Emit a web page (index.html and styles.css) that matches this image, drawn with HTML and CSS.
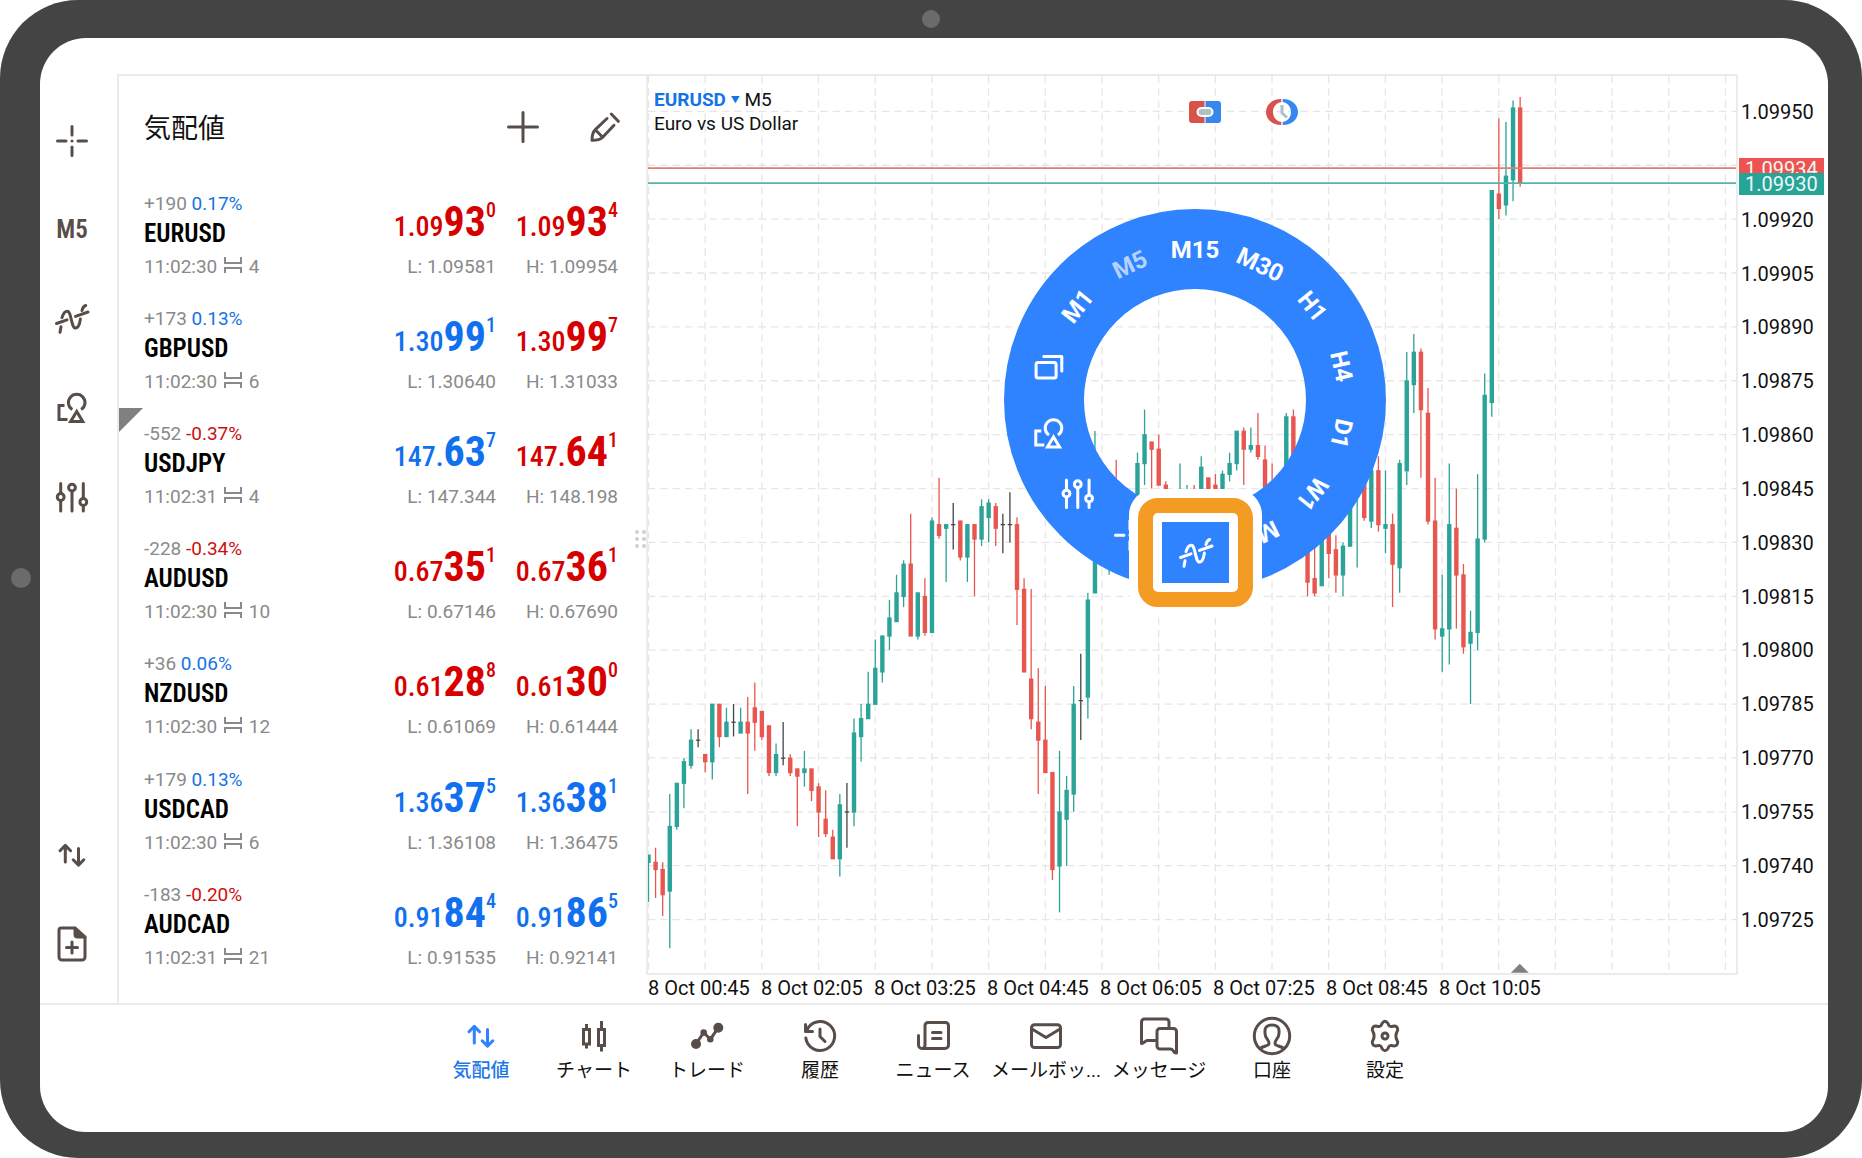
FILE: index.html
```html
<!DOCTYPE html>
<html lang="ja">
<head>
<meta charset="utf-8">
<title>気配値</title>
<link rel="stylesheet" href="styles.css">
</head>
<body>
<svg class="defs" aria-hidden="true">
  <symbol id="i-cross" viewBox="0 0 32 32"><path d="M1.500 16H10M22 16h8.500M16 1.500V10M16 22v8.500M16 15.900v.2"/></symbol>
  <symbol id="i-indicator" viewBox="0 0 32 32"><path d="M.5 20.500 11 16.800M19.500 13.400 32 9M6 14.600C7.300 10.500 9 8.300 11.300 8.300 15.500 8.300 15 25 19.500 25c2.600 0 4.200-4 4.900-9M4 29.300l1-5.600M26 7.500C26.600 5 28 3 29.700 2.500"/></symbol>
  <symbol id="i-shapes" viewBox="0 0 32 32"><path class="sharp" d="M16.300 17.600a8.300 8.300 0 1 1 8.800 0M20.700 19.500 14.600 29.600h12.200zM8.500 13.500H3v14H11.500"/></symbol>
  <symbol id="i-sliders" viewBox="0 0 32 32"><path d="M4.700 2.500v10M4.700 19.500V30M16 10.200V30M27.300 2.500v15M27.300 24.500V30"/><circle cx="4.700" cy="16" r="3.400"/><circle cx="16" cy="6.600" r="3.400"/><circle cx="27.300" cy="21" r="3.400"/></symbol>
  <symbol id="i-windows" viewBox="0 0 32 32"><rect x="3.300" y="12" width="20" height="15.500" rx="2"/><path d="M11 6h18v14.500"/></symbol>
  <symbol id="i-updown" viewBox="0 0 32 32"><path d="M9.300 23V6.500M4 11.700l5.300-5.300 5.300 5.300M22.500 9.500V26M17.200 20.800l5.300 5.300 5.300-5.300"/></symbol>
  <symbol id="i-newdoc" viewBox="0 0 32 38"><path d="M5 3H19l10 9V32a3 3 0 0 1-3 3H6a3 3 0 0 1-3-3V5a2 2 0 0 1 2-2zM16 17v11M10.500 22.500h11"/><path class="solid" d="M19 3l10 9H21.500a2.500 2.500 0 0 1-2.500-2.500z"/></symbol>
  <symbol id="i-plus" viewBox="0 0 32 32"><path d="M1.500 16h29M16 1.500v29"/></symbol>
  <symbol id="i-pencil" viewBox="0 0 32 32"><path d="M18 7.500 6.300 18.700C3.500 21.500 3 25 3 29.300 7.500 29.300 11 29 13.700 26.200L25 14.300M6.300 18.700 13.700 26.200M22.300 3 29.300 10.300"/></symbol>
  <symbol id="i-spread" viewBox="0 0 18 16"><path d="M1 0V6H17V0M1 16v-5H17v5"/></symbol>
  <symbol id="i-chart" viewBox="0 0 32 32"><path class="sharp" d="M5.500 9.500h6v14.500h-6zM20.500 9.500h6v16h-6zM8.500 4v5M8.500 24.500v4M23.500 1V9M23.500 26v5.500"/></symbol>
  <symbol id="i-trade" viewBox="0 0 32 32"><path d="M5 24 12.700 12.500 19.300 19.300 27.300 7.700"/><g class="solid"><circle cx="5" cy="24" r="3.500"/><circle cx="27.300" cy="7.700" r="3.500"/><circle cx="12.700" cy="12.500" r="1.800"/><circle cx="19.300" cy="19.300" r="1.800"/></g></symbol>
  <symbol id="i-history" viewBox="0 0 32 32"><path d="M1.800 18A14.500 14.500 0 1 0 3.200 9.500M1.500 4.500V11.500H8.500M16 9v7.500l5 5"/></symbol>
  <symbol id="i-news" viewBox="0 0 32 32"><path d="M8 25V5.500a3 3 0 0 1 3-3H28.500a3 3 0 0 1 3 3V25a3.500 3.500 0 0 1-3.500 3.500H5A3.500 3.500 0 0 1 1.500 25V15.500M8 25a3.500 3.500 0 0 1-3 3.500M15.500 12.500H24M15.500 18.500H24"/></symbol>
  <symbol id="i-mail" viewBox="0 0 32 32"><rect x="1.500" y="4.700" width="29" height="22.800" rx="3"/><path d="M2 9 16 17.500 30 9"/></symbol>
  <symbol id="i-message" viewBox="0 0 38 38"><path d="M29 11V5a3 3 0 0 0-3-3H4.500a3 3 0 0 0-3 3V26.500c2 .5 3.500-3 6-3H16M20 11.500H33.500a3 3 0 0 1 3 3V36C33 36.500 34 32 30.500 32H20a3 3 0 0 1-3-3V14.500a3 3 0 0 1 3-3z"/></symbol>
  <symbol id="i-account" viewBox="0 0 38 38"><circle cx="19" cy="19" r="17.700"/><path d="M7 31.500c3-2 6-2.500 8-3.500 2-1.500.5-4-.5-5.500C12.500 20 11.700 18 12 15 11.500 10 14.500 8 19 8s7.500 2 7 7c.3 3-.5 5-2.500 7.500-1 1.500-2.500 4-.5 5.500 2 1 5 1.500 8 3.500"/></symbol>
  <symbol id="i-gear" viewBox="0 0 32 32"><path d="M13 3.500Q16 -1 19 3.500C20 6.500 21 7 24 6.200Q29 5.500 28.700 10.200C26.300 14 26.300 18 28.700 21.800Q29 26.500 24 25.800C21 25 20 25.500 19 28.500Q16 33 13 28.500C12 25.500 11 25 8 25.800Q3 26.500 3.300 21.800C5.700 18 5.700 14 3.300 10.200Q3 5.500 8 6.200C11 7 12 6.500 13 3.500z"/><circle cx="16" cy="16" r="3"/></symbol>
</svg>

<div class="device">
  <span class="lens lens-top"></span>
  <span class="lens lens-left"></span>
  <div class="screen">
    <main class="workspace">
      <div class="rail">
        <button aria-label="十字線"><svg class="icon"><use href="#i-cross"/></svg></button>
        <button>M5</button>
        <button aria-label="インディケータ"><svg class="icon"><use href="#i-indicator"/></svg></button>
        <button aria-label="オブジェクト"><svg class="icon"><use href="#i-shapes"/></svg></button>
        <button aria-label="チャート設定"><svg class="icon"><use href="#i-sliders"/></svg></button>
        <button class="push" aria-label="気配値"><svg class="icon"><use href="#i-updown"/></svg></button>
        <button aria-label="新規注文"><svg class="icon icon-doc"><use href="#i-newdoc"/></svg></button>
      </div>

      <section class="quotes">
        <header class="quotes-head">
          <h1>気配値</h1>
          <button aria-label="追加"><svg class="icon"><use href="#i-plus"/></svg></button>
          <button aria-label="編集"><svg class="icon"><use href="#i-pencil"/></svg></button>
        </header>
        <ul class="list">
          <li class="row">
            <p class="change">+190 <span class="up">0.17%</span></p>
            <p class="symbol">EURUSD</p>
            <p class="time">11:02:30 <svg><use href="#i-spread"/></svg> 4</p>
            <p class="price red">1.09<b>93</b><sup>0</sup></p><p class="price red">1.09<b>93</b><sup>4</sup></p>
            <p class="limit">L: 1.09581</p><p class="limit">H: 1.09954</p>
          </li>
          <li class="row">
            <p class="change">+173 <span class="up">0.13%</span></p>
            <p class="symbol">GBPUSD</p>
            <p class="time">11:02:30 <svg><use href="#i-spread"/></svg> 6</p>
            <p class="price blue">1.30<b>99</b><sup>1</sup></p><p class="price red">1.30<b>99</b><sup>7</sup></p>
            <p class="limit">L: 1.30640</p><p class="limit">H: 1.31033</p>
          </li>
          <li class="row marked">
            <p class="change">-552 <span class="down">-0.37%</span></p>
            <p class="symbol">USDJPY</p>
            <p class="time">11:02:31 <svg><use href="#i-spread"/></svg> 4</p>
            <p class="price blue">147.<b>63</b><sup>7</sup></p><p class="price red">147.<b>64</b><sup>1</sup></p>
            <p class="limit">L: 147.344</p><p class="limit">H: 148.198</p>
          </li>
          <li class="row">
            <p class="change">-228 <span class="down">-0.34%</span></p>
            <p class="symbol">AUDUSD</p>
            <p class="time">11:02:30 <svg><use href="#i-spread"/></svg> 10</p>
            <p class="price red">0.67<b>35</b><sup>1</sup></p><p class="price red">0.67<b>36</b><sup>1</sup></p>
            <p class="limit">L: 0.67146</p><p class="limit">H: 0.67690</p>
          </li>
          <li class="row">
            <p class="change">+36 <span class="up">0.06%</span></p>
            <p class="symbol">NZDUSD</p>
            <p class="time">11:02:30 <svg><use href="#i-spread"/></svg> 12</p>
            <p class="price red">0.61<b>28</b><sup>8</sup></p><p class="price red">0.61<b>30</b><sup>0</sup></p>
            <p class="limit">L: 0.61069</p><p class="limit">H: 0.61444</p>
          </li>
          <li class="row">
            <p class="change">+179 <span class="up">0.13%</span></p>
            <p class="symbol">USDCAD</p>
            <p class="time">11:02:30 <svg><use href="#i-spread"/></svg> 6</p>
            <p class="price blue">1.36<b>37</b><sup>5</sup></p><p class="price blue">1.36<b>38</b><sup>1</sup></p>
            <p class="limit">L: 1.36108</p><p class="limit">H: 1.36475</p>
          </li>
          <li class="row">
            <p class="change">-183 <span class="down">-0.20%</span></p>
            <p class="symbol">AUDCAD</p>
            <p class="time">11:02:31 <svg><use href="#i-spread"/></svg> 21</p>
            <p class="price blue">0.91<b>84</b><sup>4</sup></p><p class="price blue">0.91<b>86</b><sup>5</sup></p>
            <p class="limit">L: 0.91535</p><p class="limit">H: 0.92141</p>
          </li>
        </ul>
        <svg class="grip" viewBox="0 0 11 18" aria-hidden="true"><circle cx="2" cy="2" r="2"/><circle cx="9" cy="2" r="2"/><circle cx="2" cy="9" r="2"/><circle cx="9" cy="9" r="2"/><circle cx="2" cy="16" r="2"/><circle cx="9" cy="16" r="2"/></svg>
      </section>

      <section class="chart">
        <div class="plot">
          <svg id="candles" class="candles" viewBox="0 0 1087 896"></svg>
          <div class="caption">
            <p><button class="pair">EURUSD <small>▼</small></button> M5</p>
            <p>Euro vs US Dollar</p>
          </div>
          <div class="tools">
            <button aria-label="ワンクリック取引"><svg width="32" height="26" viewBox="0 0 32 26"><path fill="#d9524a" d="M3 2H15.500V24H3a3 3 0 0 1-3-3V5a3 3 0 0 1 3-3z"/><path fill="#3588ee" d="M16.500 2H29a3 3 0 0 1 3 3V21a3 3 0 0 1-3 3H16.500z"/><rect x="8.500" y="9" width="15" height="8" rx="4" fill="#b0bec5" stroke="#fff" stroke-width="2"/></svg></button>
            <button aria-label="板情報"><svg width="32" height="26" viewBox="0 0 32 26"><path fill="#d9524a" d="M15.300 0V3C10 4 7 8 7 13s3 9 8.300 10v3C6 26 0 20 0 13S6 0 15.300 0z"/><path fill="#3588ee" d="M16.700 0C26 0 32 6 32 13s-6 13-15.300 13v-3C22 22 25 18 25 13S22 4 16.700 3z"/><path fill="none" stroke="#b0bec5" stroke-width="3" d="M16 6v8l5 4.500"/></svg></button>
          </div>
          <div class="wheel">
            <button style="--a:0deg">M15</button>
            <button style="--a:25.700deg">M30</button>
            <button style="--a:51.400deg">H1</button>
            <button style="--a:77.100deg">H4</button>
            <button style="--a:102.900deg">D1</button>
            <button style="--a:128.600deg">W1</button>
            <button style="--a:154.300deg">MN</button>
            <button class="upright" style="--a:205.700deg" aria-label="十字線"><svg class="icon"><use href="#i-cross"/></svg></button>
            <button class="upright" style="--a:231.400deg" aria-label="チャート設定"><svg class="icon"><use href="#i-sliders"/></svg></button>
            <button class="upright" style="--a:257.100deg" aria-label="オブジェクト"><svg class="icon"><use href="#i-shapes"/></svg></button>
            <button class="upright" style="--a:282.900deg" aria-label="ウィンドウ"><svg class="icon"><use href="#i-windows"/></svg></button>
            <button style="--a:308.600deg">M1</button>
            <button class="current" style="--a:334.300deg">M5</button>
            <div class="focus"><div class="focus-frame"><button aria-label="インディケータ"><svg class="icon"><use href="#i-indicator"/></svg></button></div></div>
          </div>
        </div>
        <div class="prices">
          <span>1.09950</span><span></span><span>1.09920</span><span>1.09905</span><span>1.09890</span><span>1.09875</span><span>1.09860</span><span>1.09845</span><span>1.09830</span><span>1.09815</span><span>1.09800</span><span>1.09785</span><span>1.09770</span><span>1.09755</span><span>1.09740</span><span>1.09725</span>
          <div class="tags"><span class="tag ask">1.09934</span><span class="tag bid">1.09930</span></div>
        </div>
        <div class="times">
          <span>8 Oct 00:45</span><span>8 Oct 02:05</span><span>8 Oct 03:25</span><span>8 Oct 04:45</span><span>8 Oct 06:05</span><span>8 Oct 07:25</span><span>8 Oct 08:45</span><span>8 Oct 10:05</span>
        </div>
      </section>
    </main>

    <nav class="tabs">
      <a href="#quotes" class="active"><svg class="icon"><use href="#i-updown"/></svg><span>気配値</span></a>
      <a href="#chart"><svg class="icon"><use href="#i-chart"/></svg><span>チャート</span></a>
      <a href="#trade"><svg class="icon"><use href="#i-trade"/></svg><span>トレード</span></a>
      <a href="#history"><svg class="icon"><use href="#i-history"/></svg><span>履歴</span></a>
      <a href="#news"><svg class="icon"><use href="#i-news"/></svg><span>ニュース</span></a>
      <a href="#mail"><svg class="icon"><use href="#i-mail"/></svg><span>メールボッ...</span></a>
      <a href="#messages"><svg class="icon icon-large"><use href="#i-message"/></svg><span>メッセージ</span></a>
      <a href="#account"><svg class="icon icon-large"><use href="#i-account"/></svg><span>口座</span></a>
      <a href="#settings"><svg class="icon"><use href="#i-gear"/></svg><span>設定</span></a>
    </nav>
  </div>
</div>
<script src="chart.js"></script>
</body>
</html>
```
FILE: chart.js
```js
// Candles as [high, low, body top, body bottom, colour], in points above 1.09700.
// A null is a bar without a drawn candle.
const U = "#2ba398", D = "#e85650", N = "#444444";
const bars = [
  [43,30,43,41,U],[45,31,41,39,D],[41,26,39,32,D],[60,17,51,33,U],[63,50,63,51,U],[70,56,69,63,U],
  [78,67,75,68,U],[78,73,75,75,N],[71,66,71,69,D],[85,64,85,69,U],[85,73,85,76,D],[84,76,80,76,U],
  [85,76,80,80,N],[84,77,80,77,U],[87,60,80,77,D],[91,72,84,80,D],[83,75,83,76,D],[79,65,79,66,D],
  [74,65,71,66,U],[80,68,70,70,N],[71,65,70,66,D],[67,51,67,65,D],[72,62,67,66,U],[67,58,67,61,D],
  [63,48,62,55,D],[61,48,53,49,D],[50,42,48,42,D],[60,37,57,42,U],[63,45,55,55,N],[81,51,77,55,U],
  [85,69,81,76,U],[94,81,85,81,U],[103,85,95,85,U],[104,91,104,94,U],[114,100,109,104,U],[121,108,116,108,U],
  [125,112,124,115,U],[138,104,124,104,D],[116,103,116,104,U],[120,104,115,105,D],[137,105,136,105,U],[148,131,135,132,D],
  [135,119,135,134,U],[141,128,135,135,N],[136,125,136,126,D],[135,119,135,126,U],[135,115,135,131,D],[142,129,140,131,U],
  [142,130,141,137,U],[141,129,140,134,D],[138,127,135,135,N],[144,130,135,135,N],[137,107,135,117,D],[120,94,117,94,D],
  [117,78,92,81,D],[95,60,80,75,D],[90,66,75,66,D],[66,36,66,39,D],[72,27,55,40,U],[65,40,61,53,U],
  [90,55,85,60,U],[99,75,86,86,N],[116,81,114,87,U],[161,116,133,116,U],null,[132,121,131,125,U],
  [153,130,145,132,D],[140,132,140,132,U],[143,134,143,134,U],[155,140,152,140,U],[167,146,160,152,U],[158,145,158,156,D],
  [160,146,156,146,D],[147,140,146,141,D],[144,140,144,140,D],[152,140,143,141,U],[146,140,143,141,U],[146,140,143,141,D],
  [154,140,151,141,U],[148,140,148,141,D],[149,140,146,141,D],[150,141,149,142,U],[155,147,152,149,U],[161,150,161,152,U],
  [162,146,161,156,D],[162,155,157,156,U],[166,153,157,154,D],[157,140,153,140,D],[152,140,144,141,D],null,
  [166,140,165,142,U],[167,130,165,135,D],null,[130,115,130,119,D],[135,115,120,116,D],[135,118,135,118,U],
  [135,120,135,127,D],[132,116,128,121,D],[130,115,129,121,U],[140,129,140,129,U],[146,123,146,143,U],[150,136,150,137,D],
  [152,134,150,136,U],[154,133,150,135,D],[150,127,135,134,U],[138,112,135,124,D],[153,116,152,123,U],[183,146,175,150,U],
  [188,166,183,174,U],[184,148,183,167,D],[173,135,166,136,D],[148,103,136,106,D],[121,94,106,104,U],[152,96,135,106,U],
  [145,106,134,121,D],[124,99,121,101,D],[111,85,105,102,U],[149,100,131,105,U],[177,130,171,131,U],[228,165,228,169,U],
  [248,220,227,223,D],[247,221,232,224,U],[253,225,251,231,U],[254,229,251,230,D]
];

const STEP = 7.08, POINT = 3.589;
const y = n => 627.5 - (n - 85) * POINT;
const out = [];

for (let i = 0; i < 20; i++) {
  const gx = 0.5 + i * 56.63;
  out.push(`<path class="grid" d="M${gx} 0V896"/>`);
}
for (let n = 25; n <= 250; n += 15) out.push(`<path class="grid" d="M0 ${y(n)}H1087"/>`);

bars.forEach((b, i) => {
  if (!b) return;
  const [h, l, t, bt, c] = b, x = 0.5 + i * STEP;
  out.push(`<path stroke="${c}" stroke-width="1.300" d="M${x} ${y(h)}V${y(l)}"/>`);
  out.push(`<rect fill="${c}" x="${x - 2.2}" y="${y(t) - 0.4}" width="4.400" height="${(t - bt) * POINT + 1.2}"/>`);
});

out.push('<path stroke="#db7f7a" stroke-width="1.700" d="M0 92H1087"/>');
out.push('<path stroke="#55b3ac" stroke-width="1.700" d="M0 107H1087"/>');
out.push('<path fill="#808080" d="M871 887l9 9h-18z"/>');
document.getElementById("candles").innerHTML = out.join("");
```
FILE: styles.css
```css
* { box-sizing: border-box; }

body {
  margin: 0;
  background: #fff;
  color: #111;
  font-family: Roboto, "Noto Sans CJK JP", sans-serif;
  font-size: 19px;
}

h1, p, ul { margin: 0; padding: 0; font-weight: 400; }
ul { list-style: none; }

button {
  padding: 0;
  border: 0;
  background: none;
  color: inherit;
  font: inherit;
  cursor: pointer;
}

.defs { position: absolute; width: 0; height: 0; }

.icon {
  display: block;
  width: 32px;
  height: 32px;
  overflow: visible;
  fill: none;
  stroke: currentColor;
  stroke-width: 3;
  stroke-linecap: round;
  stroke-linejoin: round;
}
.icon-doc { height: 38px; }
.icon-large { width: 38px; height: 38px; margin: -3px 0; }
.solid { fill: currentColor; }
.sharp { stroke-linecap: butt; stroke-linejoin: miter; }
symbol { overflow: visible; }

/* Tablet body */
.device {
  position: relative;
  display: flex;
  min-height: 100vh;
  padding: 38px 34px 26px 40px;
  border-radius: 78px;
  background: #444;
}
.lens { position: absolute; border-radius: 50%; background: #6b6b6b; }
.lens-top { top: 10px; left: 50%; width: 18px; height: 18px; margin-left: -9px; }
.lens-left { top: 50%; left: 11px; width: 20px; height: 20px; margin-top: -11px; }

.screen {
  flex: 1;
  display: flex;
  flex-direction: column;
  min-width: 0;
  padding-top: 36px;
  border-radius: 46px;
  background: #fff;
}

.workspace {
  display: grid;
  grid-template-columns: 77px 529px minmax(0, 1fr);
  border-bottom: 2px solid #ebebeb;
}

/* Left tool rail */
.rail {
  display: flex;
  flex-direction: column;
  padding: 22px 13px 14px 0;
  color: #574d49;
}
.rail button {
  display: grid;
  place-items: center;
  height: 89px;
  font: 600 25px "Roboto Condensed", Roboto, sans-serif;
}
.rail .push { margin-top: auto; }

/* Quotes */
.quotes {
  position: relative;
  display: flex;
  flex-direction: column;
  border: solid #ebebeb;
  border-width: 2px 0 0 2px;
}
.quotes-head {
  display: flex;
  align-items: center;
  gap: 50px;
  height: 101px;
  padding: 0 25px;
  color: #574d49;
}
.quotes-head h1 { flex: 1; color: #111; font-size: 27px; }

.list {
  flex: 1;
  display: grid;
  grid-auto-rows: 1fr;
  margin-bottom: 20px;
}
.row {
  position: relative;
  display: grid;
  grid-template-columns: 1fr 130px 122px;
  grid-template-rows: 24px 36px 30px;
  padding: 15px 28px 0 25px;
}
.row p { white-space: nowrap; }
.change, .time, .limit { color: #8a8a8a; }
.change { grid-area: 1 / 1; line-height: 24px; }
.symbol {
  grid-area: 2 / 1;
  color: #000;
  font: 600 25px/36px "Roboto Condensed", "Liberation Sans Narrow", sans-serif;
}
.time { grid-area: 3 / 1; line-height: 30px; }
.time svg {
  width: 18px;
  height: 16px;
  margin: 0 2px;
  fill: none;
  stroke: currentColor;
  stroke-width: 2;
}
.limit { grid-row: 3; line-height: 30px; text-align: right; }
.price {
  display: flex;
  grid-row: 1 / 3;
  justify-content: flex-end;
  align-items: baseline;
  font: 500 28px/60px "Roboto Condensed", "Liberation Sans Narrow", sans-serif;
}
.price b { font-size: 42px; font-weight: 700; }
.price sup { align-self: flex-start; font-size: 20px; line-height: 36px; }
.up { color: #1473e6; }
.down { color: #cc1010; }
.red { color: #d60000; }
.blue { color: #1070f0; }

.marked::before {
  content: "";
  position: absolute;
  top: 1px;
  left: 0;
  border: solid transparent;
  border-width: 0 24px 24px 0;
  border-top: 24px solid #808080;
  border-bottom: 0;
}
.grip {
  position: absolute;
  top: 50%;
  right: 0;
  width: 11px;
  height: 18px;
  transform: translateY(-50%);
  fill: #cfcfcf;
}

/* Chart */
.chart {
  display: grid;
  grid-template-columns: minmax(0, 1fr) 92px;
  grid-template-rows: auto 28px;
}
.plot {
  position: relative;
  border: 2px solid #ebebeb;
  margin-right: -2px;
}
.candles { display: block; width: 100%; }
.grid { fill: none; stroke: #e6e6e6; stroke-width: 1.3; stroke-dasharray: 7.3 5; }

.caption {
  position: absolute;
  top: 12px;
  left: 6px;
  line-height: 23px;
}
.pair { color: #1473e6; font-weight: 700; }
.pair small { font-size: 9px; vertical-align: 3px; }
.tools {
  position: absolute;
  top: 23px;
  left: 50%;
  display: flex;
  gap: 45px;
  margin-left: -3px;
}
.tools svg { display: block; }

.prices {
  position: relative;
  display: flex;
  flex-direction: column;
  justify-content: space-between;
  padding: 26px 0 43px 5px;
  font-size: 20px;
  line-height: 24px;
}
.prices > span { height: 24px; }
.tags {
  position: absolute;
  top: 84px;
  left: 3px;
  right: 4px;
  color: #eef7f6;
}
.tag { display: block; height: 22px; line-height: 22px; padding-left: 6px; }
.ask { height: 15px; overflow: hidden; background: #ee5350; }
.bid { background: #26a498; }

.times {
  grid-column: 1 / 3;
  display: grid;
  grid-template-columns: repeat(8, 113px);
  padding-left: 2px;
  font-size: 20px;
  line-height: 26px;
  white-space: nowrap;
}

/* Radial menu */
.wheel {
  position: absolute;
  top: 133px;
  left: 356px;
  width: 382px;
  height: 382px;
  border: 80px solid #3083ff;
  border-radius: 50%;
  color: #fff;
}
.wheel > button {
  position: absolute;
  top: 95px;
  left: 81px;
  width: 60px;
  height: 32px;
  font-size: 24px;
  line-height: 32px;
  font-weight: 700;
  transform: rotate(var(--a)) translateY(-150px);
}
.wheel > .upright { transform: rotate(var(--a)) translateY(-150px) rotate(calc(0deg - var(--a))); }
.wheel .upright .icon { margin: auto; }
.wheel .current { color: #b5d3ff; }
.focus {
  position: absolute;
  top: 200px;
  left: 45px;
  padding: 9px;
  border-radius: 26px;
  background: #fff;
}
.focus-frame {
  padding: 9px;
  border: 15px solid #f49b23;
  border-radius: 20px;
}
.focus button {
  display: grid;
  place-items: center;
  width: 67px;
  height: 61px;
  background: #3083ff;
}

/* Bottom tabs */
.tabs {
  display: flex;
  justify-content: center;
  padding: 15px 2px 0 0;
}
.tabs a {
  display: flex;
  flex-direction: column;
  align-items: center;
  gap: 6px;
  width: 113px;
  color: #574d49;
  font-size: 19px;
  line-height: 26px;
  text-decoration: none;
  white-space: nowrap;
}
.tabs span { color: #111; }
.tabs .active { color: #3083ff; font-weight: 500; }
.tabs .active span { color: #1f78e8; }
```
